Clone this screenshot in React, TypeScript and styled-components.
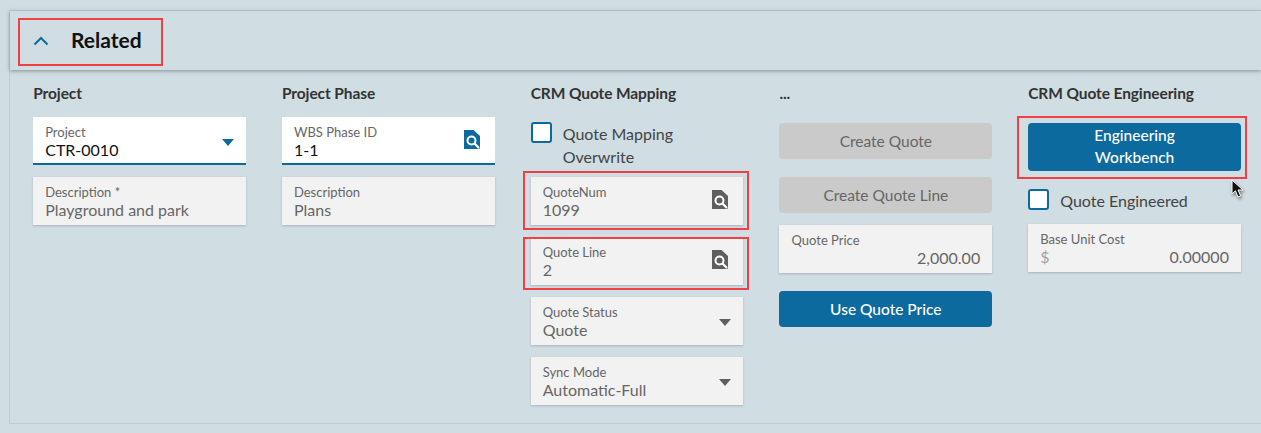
import React from "react";
import styled, { createGlobalStyle, css } from "styled-components";

const GlobalStyle = createGlobalStyle`
  html, body {
    margin: 0;
    padding: 0;
    background: #d0dde2;
    overflow: hidden;
  }
  body {
    font-family: "Lato", "Noto Sans", sans-serif;
  }
`;

const Page = styled.div`
  position: relative;
  width: 1261px;
  height: 433px;
  padding: 10px 0 10px 9px;
  box-sizing: border-box;
`;

const Panel = styled.section`
  width: 1252px;
  height: 414px;
  box-sizing: border-box;
  border: 1px solid #c4cccf;
  border-right: none;
`;

const PanelHeader = styled.header`
  position: relative;
  height: 59px;
  display: flex;
  align-items: center;
  padding-left: 23px;
  gap: 22px;
  box-shadow: 0 1px 4px rgba(70, 80, 85, 0.55);
`;

const Title = styled.h2`
  margin: 0 0 2px;
  font-size: 21px;
  font-weight: 700;
  color: #111;
`;

const Columns = styled.div`
  display: grid;
  grid-template-columns: repeat(5, 212.75px);
  column-gap: 36px;
  padding: 12px 0 0 23.2px;
`;

const Column = styled.div`
  display: flex;
  flex-direction: column;
`;

const Heading = styled.h3<{ $gap?: number }>`
  margin: 0 0 ${(p) => p.$gap ?? 12}px;
  height: 23px;
  line-height: 23px;
  font-size: 15.5px;
  font-weight: 700;
  color: #333;
  letter-spacing: -0.1px;
`;

const Field = styled.div<{ $active?: boolean; $outlineTop?: number; $gap?: number }>`
  position: relative;
  height: 48px;
  box-sizing: border-box;
  flex: none;
  margin-bottom: ${(p) => p.$gap ?? 12}px;
  padding: 7px 12px 0;
  background: ${(p) => (p.$active ? "#fff" : "#f2f2f2")};
  border-bottom: ${(p) => (p.$active ? "2px solid #0c6a9f" : "none")};
  box-shadow: ${(p) => (p.$active ? "none" : "0 1px 2px rgba(90, 100, 105, 0.35)")};
  ${(p) =>
    p.$outlineTop !== undefined &&
    css`
      &::after {
        content: "";
        position: absolute;
        top: ${p.$outlineTop}px;
        left: -8px;
        right: -6px;
        bottom: -5px;
        border: 2px solid #f14045;
        pointer-events: none;
      }
    `}
`;

const FieldLabel = styled.div`
  font-size: 13px;
  line-height: 17px;
  color: #666;
`;

const FieldValue = styled.div<{ $active?: boolean; $right?: boolean }>`
  font-size: 16px;
  line-height: 17px;
  color: ${(p) => (p.$active ? "#111" : "#666")};
  text-align: ${(p) => (p.$right ? "right" : "left")};
`;

const MoneyRow = styled.div`
  display: flex;
  justify-content: space-between;
  font-size: 16px;
  line-height: 17px;
  color: #666;
`;

const Currency = styled.span`
  color: #a3a3a3;
`;

const IconSlot = styled.span`
  position: absolute;
  top: 13px;
  right: 15px;
  display: flex;
`;

const Caret = styled.span<{ $active?: boolean }>`
  position: absolute;
  top: 22px;
  right: 12px;
  width: 0;
  height: 0;
  border-left: 6px solid transparent;
  border-right: 6px solid transparent;
  border-top: 7px solid ${(p) => (p.$active ? "#0c6a9f" : "#5f5f5f")};
`;

const Button = styled.button<{ $disabled?: boolean; $tall?: boolean; $highlight?: boolean; $gap?: number }>`
  position: relative;
  display: block;
  flex: none;
  width: 100%;
  height: ${(p) => (p.$tall ? 48 : 36)}px;
  margin: 0 0 ${(p) => p.$gap ?? 0}px;
  padding: 0 40px ${(p) => (p.$tall ? 2 : 0)}px;
  border: none;
  border-radius: 4px;
  font-family: inherit;
  font-size: 15.5px;
  line-height: 22px;
  font-weight: ${(p) => (p.$disabled ? 400 : 500)};
  background: ${(p) => (p.$disabled ? "#cacaca" : "#0c6a9f")};
  color: ${(p) => (p.$disabled ? "#666" : "#fff")};
  ${(p) =>
    p.$highlight &&
    css`
      &::after {
        content: "";
        position: absolute;
        top: -7px;
        left: -11px;
        right: -6px;
        bottom: -8px;
        border: 2px solid #f14045;
      }
    `}
`;

const CheckRow = styled.label<{ $top?: number; $gap: number }>`
  display: flex;
  align-items: flex-start;
  gap: 11px;
  padding-top: ${(p) => p.$top ?? 0}px;
  margin-bottom: ${(p) => p.$gap}px;
  font-size: 16px;
  line-height: 23px;
  color: #444;
`;

const Box = styled.span`
  flex: none;
  width: 21px;
  height: 21px;
  box-sizing: border-box;
  border: 2px solid #0c6a9f;
  border-radius: 3px;
  background: #fff;
`;

const CheckText = styled.span`
  width: 150px;
`;

const RelatedOutline = styled.div`
  position: absolute;
  top: 18px;
  left: 18px;
  width: 145px;
  height: 48px;
  box-sizing: border-box;
  border: 2px solid #f14045;
  pointer-events: none;
`;

const Cursor = styled.svg`
  position: absolute;
  top: 179px;
  left: 1231px;
  filter: drop-shadow(1px 2px 1.5px rgba(0, 0, 0, 0.45));
`;

const ChevronUp = () => (
  <svg width="16" height="10" viewBox="0 0 16 10" fill="none">
    <path d="M1.5 8.5 8 2l6.5 6.5" stroke="#0c6a9f" strokeWidth="2" />
  </svg>
);

const LookupIcon = ({ color }: { color: string }) => (
  <svg width="16" height="19" viewBox="0 0 16 19">
    <path d="M0 0h9.5L16 6v11.5a1.5 1.5 0 0 1-1.5 1.5H0z" fill={color} />
    <circle cx="7.5" cy="10.5" r="4" fill="none" stroke="#fff" strokeWidth="2" />
    <path d="M10.5 13.5 15 18" stroke="#fff" strokeWidth="2.2" />
  </svg>
);

export default function App() {
  return (
    <>
      <GlobalStyle />
      <Page>
        <Panel>
          <PanelHeader>
            <ChevronUp />
            <Title>Related</Title>
          </PanelHeader>
          <Columns>
            <Column>
              <Heading>Project</Heading>
              <Field $active>
                <FieldLabel>Project</FieldLabel>
                <FieldValue $active>CTR-0010</FieldValue>
                <Caret $active />
              </Field>
              <Field>
                <FieldLabel>Description *</FieldLabel>
                <FieldValue>Playground and park</FieldValue>
              </Field>
            </Column>

            <Column>
              <Heading>Project Phase</Heading>
              <Field $active>
                <FieldLabel>WBS Phase ID</FieldLabel>
                <FieldValue $active>1-1</FieldValue>
                <IconSlot>
                  <LookupIcon color="#0c6a9f" />
                </IconSlot>
              </Field>
              <Field>
                <FieldLabel>Description</FieldLabel>
                <FieldValue>Plans</FieldValue>
              </Field>
            </Column>

            <Column>
              <Heading>CRM Quote Mapping</Heading>
              <CheckRow $top={5} $gap={9}>
                <Box />
                <CheckText>Quote Mapping Overwrite</CheckText>
              </CheckRow>
              <Field $outlineTop={-6}>
                <FieldLabel>QuoteNum</FieldLabel>
                <FieldValue>1099</FieldValue>
                <IconSlot>
                  <LookupIcon color="#5f5f5f" />
                </IconSlot>
              </Field>
              <Field $outlineTop={0}>
                <FieldLabel>Quote Line</FieldLabel>
                <FieldValue>2</FieldValue>
                <IconSlot>
                  <LookupIcon color="#5f5f5f" />
                </IconSlot>
              </Field>
              <Field>
                <FieldLabel>Quote Status</FieldLabel>
                <FieldValue>Quote</FieldValue>
                <Caret />
              </Field>
              <Field>
                <FieldLabel>Sync Mode</FieldLabel>
                <FieldValue>Automatic-Full</FieldValue>
                <Caret />
              </Field>
            </Column>

            <Column>
              <Heading $gap={18}>...</Heading>
              <Button $disabled $gap={18}>Create Quote</Button>
              <Button $disabled $gap={12}>Create Quote Line</Button>
              <Field $gap={18}>
                <FieldLabel>Quote Price</FieldLabel>
                <FieldValue $right>2,000.00</FieldValue>
              </Field>
              <Button>Use Quote Price</Button>
            </Column>

            <Column>
              <Heading $gap={18}>CRM Quote Engineering</Heading>
              <Button $tall $highlight $gap={18}>Engineering Workbench</Button>
              <CheckRow $gap={12}>
                <Box />
                <span>Quote Engineered</span>
              </CheckRow>
              <Field>
                <FieldLabel>Base Unit Cost</FieldLabel>
                <MoneyRow>
                  <Currency>$</Currency>
                  <span>0.00000</span>
                </MoneyRow>
              </Field>
            </Column>
          </Columns>
        </Panel>
        <RelatedOutline />
        <Cursor width="13" height="20" viewBox="0 0 13 20">
          <path d="M1 1v14l3.4-3.2L7 18l2.6-1.2L7 11h5z" fill="#111" stroke="#fff" strokeWidth="1" />
        </Cursor>
      </Page>
    </>
  );
}
